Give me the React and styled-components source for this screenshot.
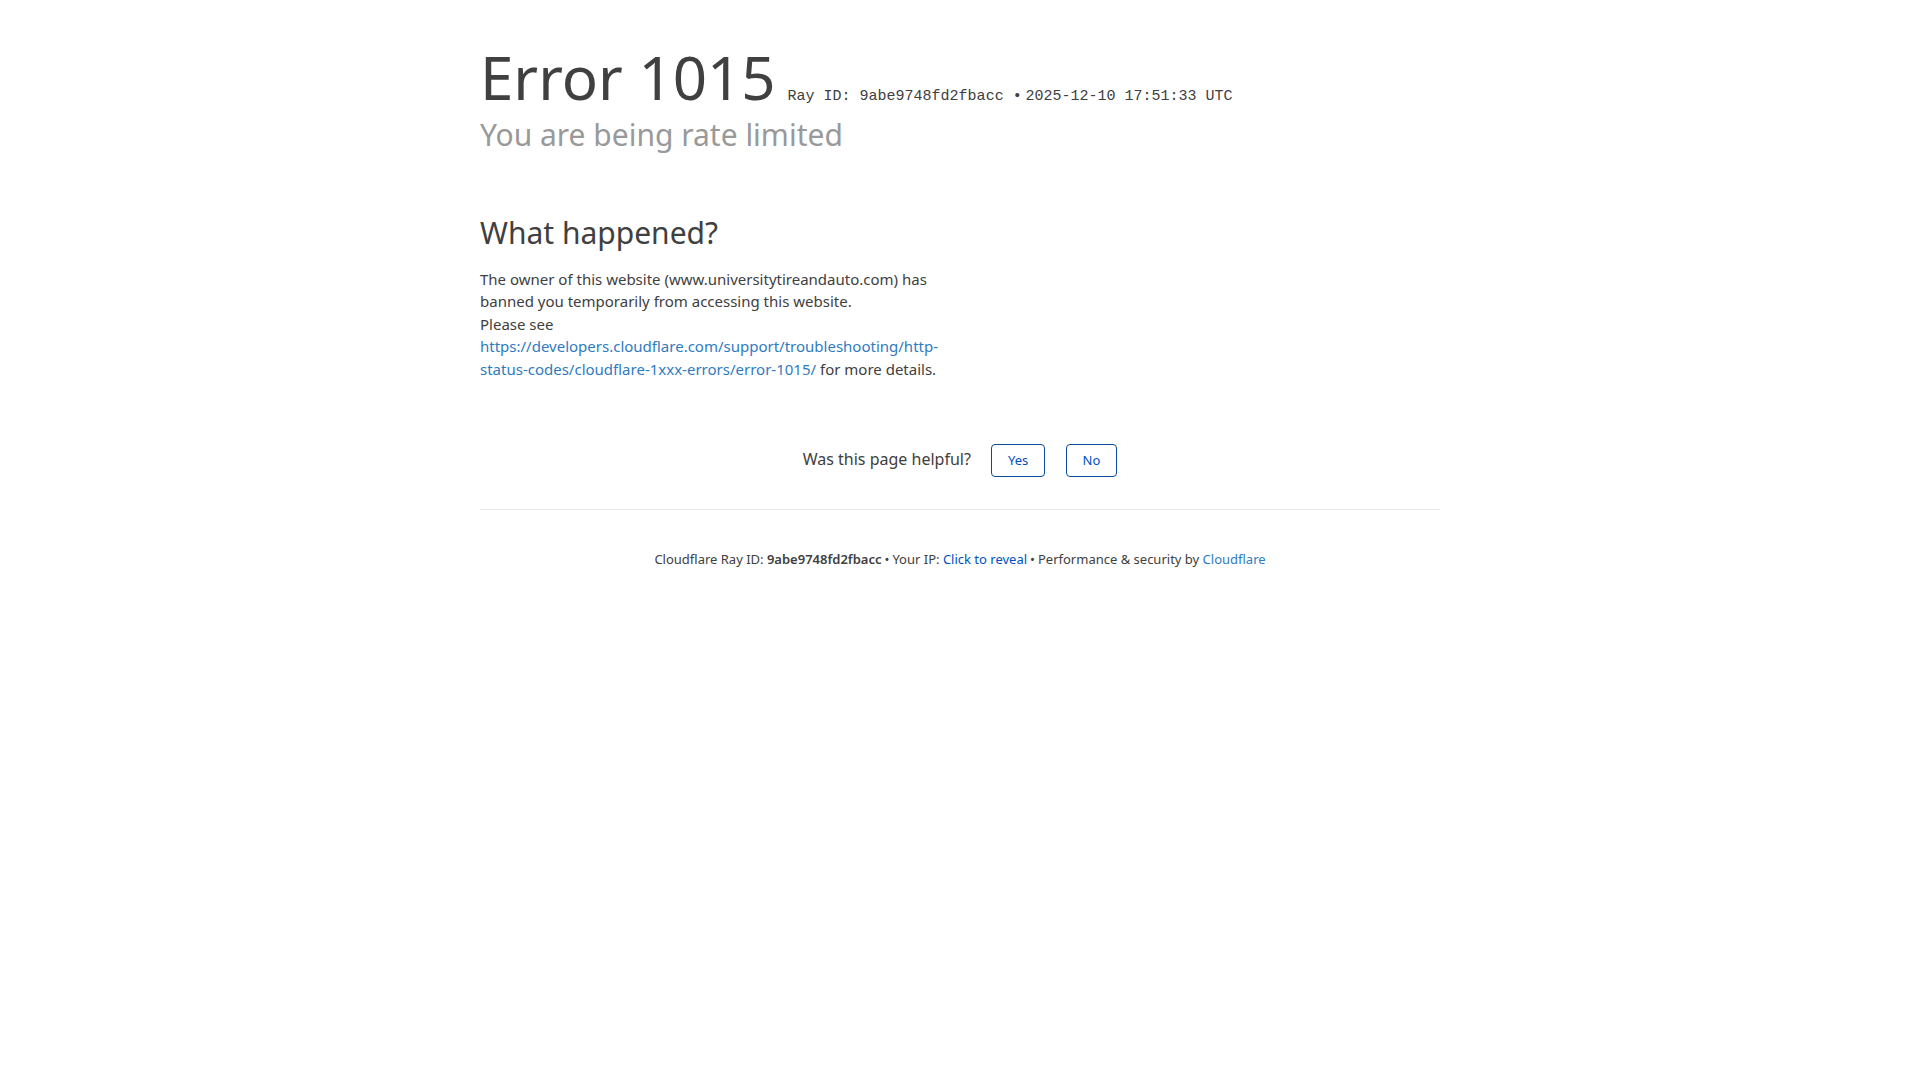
import React from 'react';
import styled, { createGlobalStyle } from 'styled-components';

const GlobalStyle = createGlobalStyle`
    html, body {
        margin: 0;
        padding: 0;
        background: #fff;
    }
    body {
        font-family: "Noto Sans", "Open Sans", sans-serif;
        font-size: 15px;
        line-height: 1.5;
        color: #404040;
        -webkit-font-smoothing: antialiased;
    }
`;

const Wrapper = styled.div`
    width: 100%;
`;

const Header = styled.header`
    width: 960px;
    margin: 0 auto 60px;
    padding-top: 40px;
`;

const Title = styled.h1`
    display: inline-block;
    margin: 0 8px 0 0;
    font-size: 60px;
    font-weight: 400;
    line-height: 1.25;
    color: #404040;
`;

const RayId = styled.span`
    display: inline-block;
    font-family: "Liberation Mono", monospace;
    font-size: 15px;
    color: #404040;
`;

const Subtitle = styled.h2`
    margin: 0;
    font-size: 30px;
    font-weight: 400;
    line-height: 1.3;
    color: #999;
`;

const Section = styled.section`
    width: 960px;
    margin: 0 auto 32px;
`;

const Column = styled.div`
    width: 50%;
`;

const SectionTitle = styled.h2`
    margin: 0 0 16px;
    font-size: 30px;
    font-weight: 400;
    line-height: 1.25;
    color: #404040;
`;

const Para = styled.p`
    margin: 0;
`;

const Link = styled.a`
    color: #2f7bbf;
    text-decoration: none;
`;

const Feedback = styled.div`
    padding: 32px 0;
    text-align: center;
    font-size: 16px;
`;

const FeedbackButton = styled.button`
    margin-left: 16px;
    padding: 8px 16px;
    background: #fff;
    border: 1px solid #0a4a9e;
    border-radius: 4px;
    color: #0051c3;
    font-family: "Noto Sans", sans-serif;
    font-size: 13px;
    line-height: 1.15;
    cursor: pointer;
`;

const Footer = styled.div`
    width: 960px;
    margin: 0 auto;
    padding: 40px 0;
    text-align: center;
    border-top: 1px solid #ebebeb;
`;

const FooterText = styled.p`
    margin: 0;
    font-size: 13px;
`;

const Separator = styled.span`
    padding: 0 3px;
`;

const RevealButton = styled.button`
    padding: 0;
    border: 0;
    background: none;
    font-family: inherit;
    font-size: 13px;
    color: #0051c3;
    cursor: pointer;
`;

const Strong = styled.strong`
    font-weight: 600;
`;

export default function App() {
    return (
        <>
            <GlobalStyle />
            <Wrapper>
                <Header>
                    <Title>Error 1015</Title>{' '}
                    <RayId>Ray ID: 9abe9748fd2fbacc &bull;</RayId>{' '}
                    <RayId>2025-12-10 17:51:33 UTC</RayId>
                    <Subtitle>You are being rate limited</Subtitle>
                </Header>
                <Section>
                    <Column>
                        <SectionTitle>What happened?</SectionTitle>
                        <Para>
                            The owner of this website (www.universitytireandauto.com) has banned you
                            temporarily from accessing this website.
                        </Para>
                        <Para>
                            Please see{' '}
                            <Link href="#">
                                https://developers.cloudflare.com/support/troubleshooting/http-status-codes/cloudflare-1xxx-errors/error-1015/
                            </Link>{' '}
                            for more details.
                        </Para>
                    </Column>
                </Section>
                <Feedback>
                    Was this page helpful?{' '}
                    <FeedbackButton type="button">Yes</FeedbackButton>{' '}
                    <FeedbackButton type="button">No</FeedbackButton>
                </Feedback>
                <Footer>
                    <FooterText>
                        <span>
                            Cloudflare Ray ID: <Strong>9abe9748fd2fbacc</Strong>
                        </span>
                        <Separator>&bull;</Separator>
                        <span>
                            Your IP: <RevealButton type="button">Click to reveal</RevealButton>
                        </span>
                        <Separator>&bull;</Separator>
                        <span>
                            Performance &amp; security by <Link href="#">Cloudflare</Link>
                        </span>
                    </FooterText>
                </Footer>
            </Wrapper>
        </>
    );
}
